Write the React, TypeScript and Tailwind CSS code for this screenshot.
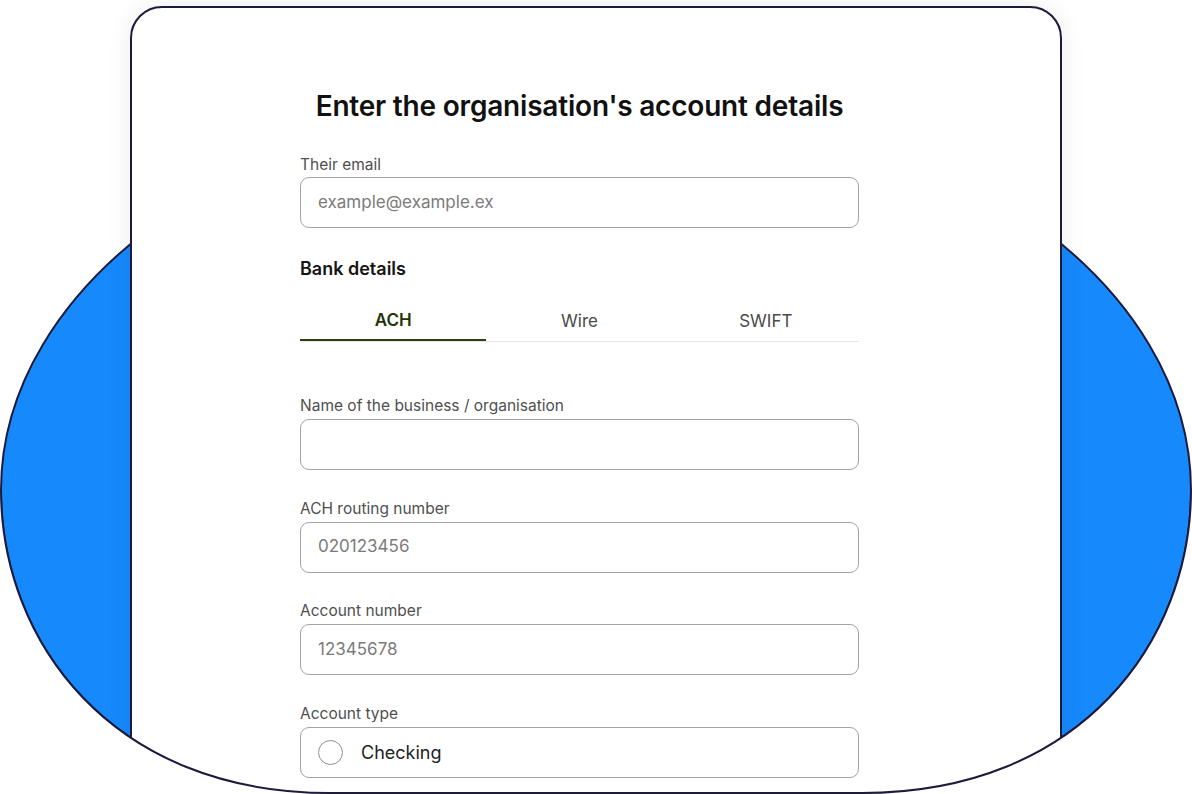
import React from 'react'

const font = { fontFamily: 'Inter, "Noto Sans", sans-serif' }

const blob =
  'M1,490 A595,395 0 0 1 1191,490 C1191,640 1082,793 862,793 L330,793 C110,793 1,640 1,490 Z'
const lowerMask =
  'M1,490 C1,640 110,793 330,793 L862,793 C1082,793 1191,640 1191,490 L1192,490 L1192,800 L0,800 L0,490 Z'
const lowerEdge = 'M1,490 C1,640 110,793 330,793 L862,793 C1082,793 1191,640 1191,490'

function Field({ label, placeholder, gap = 'mb-[3px]' }: { label: string; placeholder?: string; gap?: string }) {
  return (
    <div className="flex flex-col">
      <label className={'text-[15.5px] leading-5 text-[#4f4f4f] ' + gap}>{label}</label>
      <div className="h-[51px] rounded-[9px] border border-[#a3a3a3] px-[17px] flex items-center">
        <span className="text-[17px] text-[#7b7b7b]">{placeholder}</span>
      </div>
    </div>
  )
}

export default function App() {
  const tabs = ['ACH', 'Wire', 'SWIFT']

  return (
    <div className="relative w-[1192px] h-[794px] overflow-hidden bg-white" style={font}>
      {/* blue blob behind the card */}
      <svg className="absolute inset-0" width="1192" height="794" viewBox="0 0 1192 794">
        <path d={blob} fill="#1689fd" stroke="#1d1b3b" strokeWidth="2" />
      </svg>

      <div className="relative ml-[130px] mt-[6px] w-[932px] h-[900px] bg-white border-2 border-[#1d1b3b] rounded-t-[32px] shadow-[0_0_24px_rgba(0,0,0,0.08)]">
        <div className="w-[559px] ml-[168px] pt-[80px] flex flex-col">
          <h1 className="text-[28px] leading-9 font-semibold text-[#111111] text-center tracking-[-0.2px]">
            Enter the organisation's account details
          </h1>

          <div className="mt-[31px]">
            <Field label="Their email" placeholder="example@example.ex" gap="mb-[2px]" />
          </div>

          <h2 className="mt-[29px] text-[18px] leading-6 font-semibold text-[#151515]">Bank details</h2>

          <div className="mt-[18px] flex border-b border-[#e6e6e6]">
            {tabs.map((t, i) => (
              <div
                key={t}
                className={
                  i === 0
                    ? 'flex-1 h-[42px] pt-[3px] flex items-center justify-center text-[17px] font-semibold text-[#1f3309] border-b-2 border-[#2b4210] -mb-px'
                    : 'flex-1 h-[42px] pt-[3px] flex items-center justify-center text-[17px] text-[#4a4a4a]'
                }
              >
                {t}
              </div>
            ))}
          </div>

          <div className="mt-[54px] flex flex-col gap-[28.5px]">
            <Field label="Name of the business / organisation" />
            <Field label="ACH routing number" placeholder="020123456" />
            <Field label="Account number" placeholder="12345678" />
            <div className="flex flex-col">
              <label className="text-[15.5px] leading-5 text-[#4f4f4f] mb-[3px]">Account type</label>
              <div className="h-[51px] rounded-[9px] border border-[#a3a3a3] px-[17px] flex items-center gap-[18px]">
                <span className="w-[25px] h-[25px] rounded-full border-[1.5px] border-[#8f8f8f]" />
                <span className="text-[18px] text-[#222222]">Checking</span>
              </div>
              <div className="mt-[14px] h-[51px] rounded-[9px] border border-[#a3a3a3]" />
            </div>
          </div>
        </div>
      </div>

      {/* lower edge of the blob clips the card */}
      <svg className="absolute inset-0 pointer-events-none" width="1192" height="794" viewBox="0 0 1192 794">
        <path d={lowerMask} fill="#ffffff" />
        <path d={lowerEdge} fill="none" stroke="#1d1b3b" strokeWidth="2" />
      </svg>
    </div>
  )
}
